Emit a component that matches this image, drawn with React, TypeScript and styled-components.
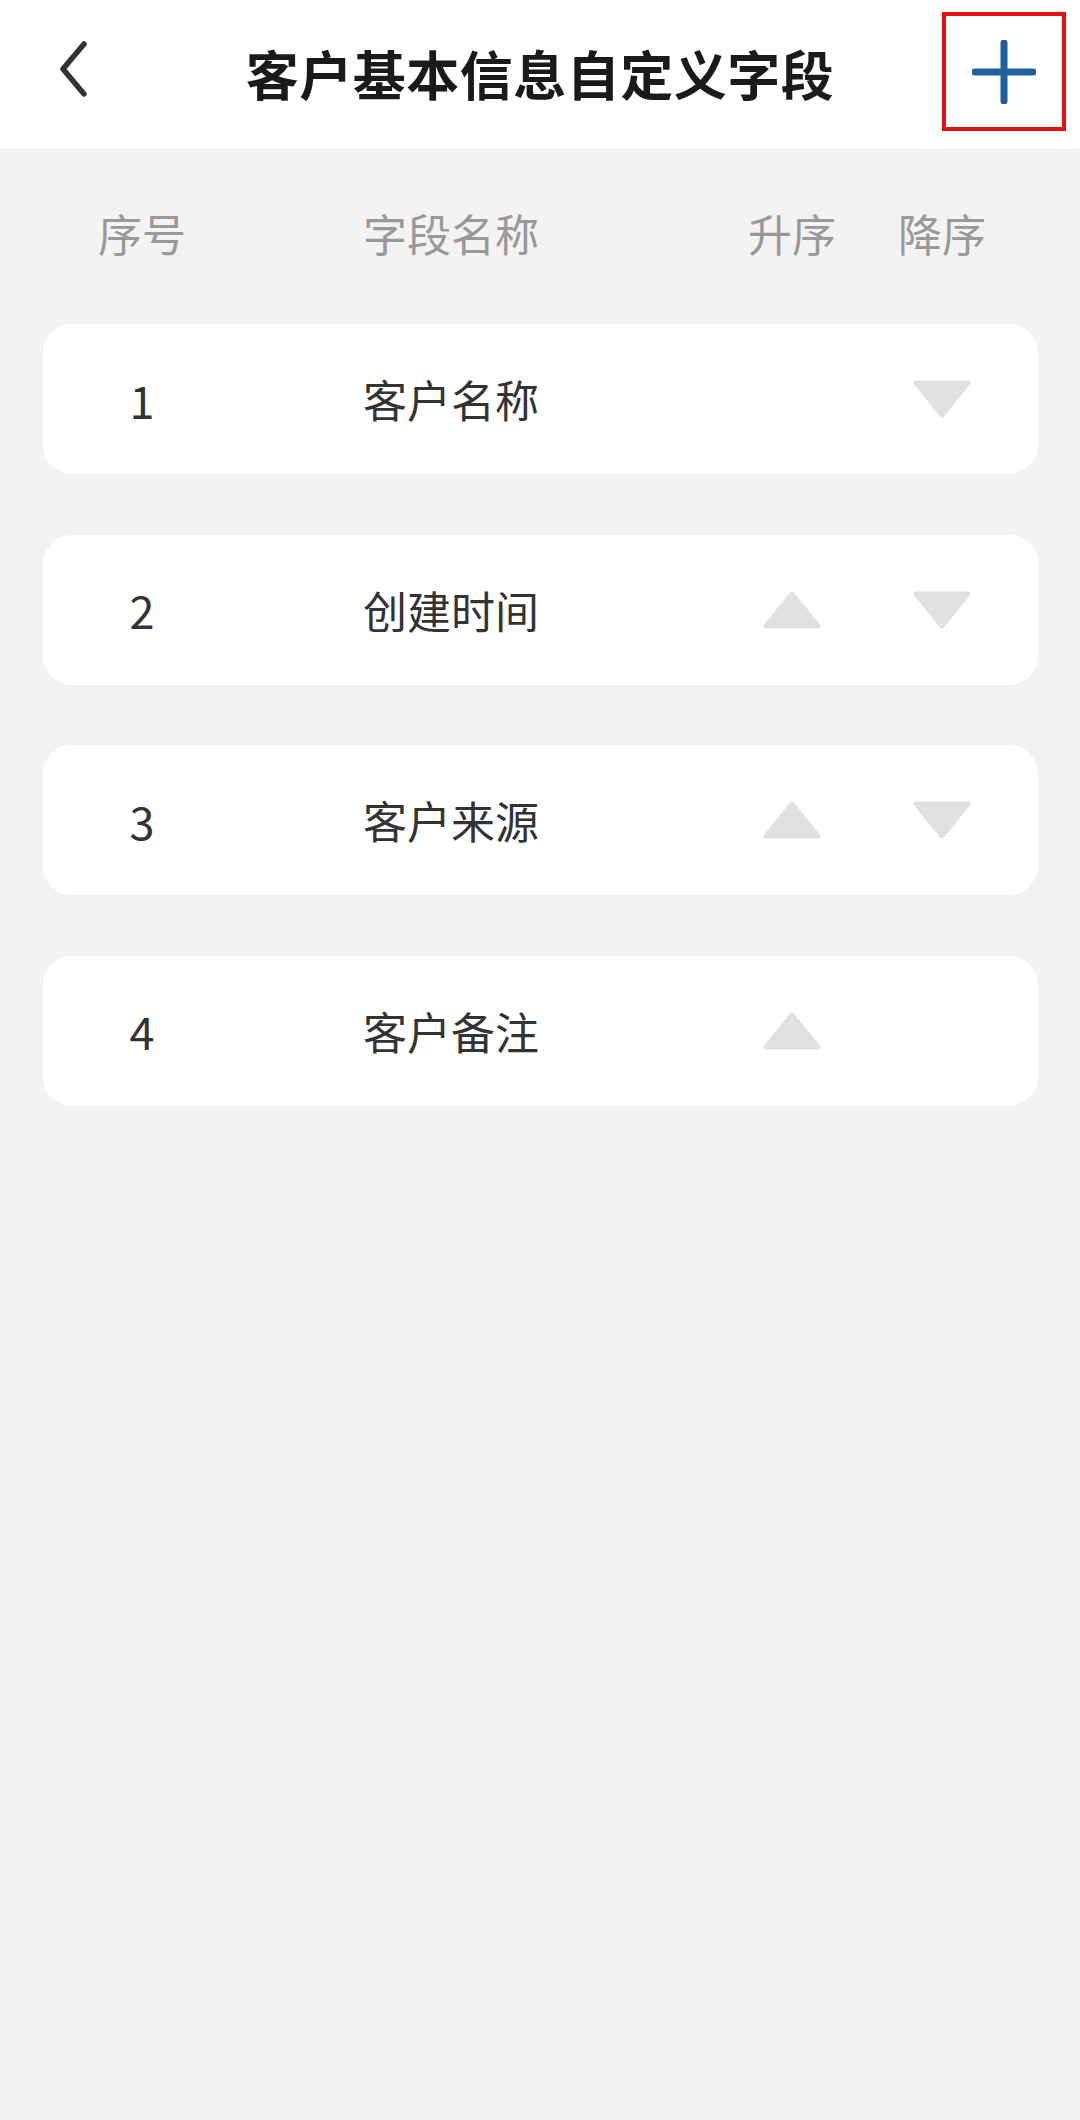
import styled, { createGlobalStyle } from "styled-components";

const GlobalStyle = createGlobalStyle`
  html, body {
    margin: 0;
    padding: 0;
    background: #f3f3f3;
  }
  body {
    font-family: "Noto Sans CJK SC", "Noto Sans", sans-serif;
    min-height: 2120px;
  }
`;

const Page = styled.div`
  min-height: 2120px;
  background: #f3f3f3;
`;

const Header = styled.header`
  display: grid;
  grid-template-columns: 1fr auto 1fr;
  align-items: center;
  height: 150px;
  background: #ffffff;
  border-bottom: 1px solid #ececec;
  box-sizing: border-box;
`;

const BackButton = styled.button`
  justify-self: start;
  display: flex;
  align-items: center;
  margin-left: 57px;
  margin-top: -12px;
  padding: 0;
  border: none;
  background: none;
  cursor: pointer;
`;

const Title = styled.h1`
  margin: 0;
  margin-top: -4px;
  font-size: 53px;
  font-weight: 700;
  color: #1a1a1a;
  letter-spacing: 0.5px;
`;

const AddButton = styled.button`
  justify-self: end;
  align-self: start;
  display: flex;
  align-items: center;
  justify-content: center;
  width: 124px;
  height: 119px;
  margin: 12px 14px 0 0;
  padding: 0;
  border: 4px solid #e41111;
  box-sizing: border-box;
  background: none;
  cursor: pointer;
`;

const Content = styled.main`
  padding: 0 42px 0 43px;
`;

const columns = "198px 1fr 150px 150px";

const ColumnRow = styled.div`
  display: grid;
  grid-template-columns: ${columns};
  padding: 61px 21px 69px 0;
  font-size: 44px;
  line-height: 44px;
  color: #999999;
`;

const Cell = styled.div<{ $align?: "center" | "left" }>`
  text-align: ${({ $align }) => $align ?? "center"};
  padding-left: ${({ $align }) => ($align === "left" ? "122px" : "0")};
  white-space: nowrap;
`;

const List = styled.div`
  display: flex;
  flex-direction: column;
  gap: 60.5px;
`;

const Card = styled.div`
  display: grid;
  grid-template-columns: ${columns};
  align-items: center;
  height: 150px;
  padding-right: 21px;
  background: #ffffff;
  border-radius: 29px;
  font-size: 44px;
  color: #333333;
`;

const Number = styled(Cell)`
  font-size: 45px;
`;

const ArrowSlot = styled.div`
  display: flex;
  justify-content: center;
  align-items: center;
  height: 40px;
`;

const Triangle = ({ up }: { up?: boolean }) => (
  <svg width="58" height="38" viewBox="0 0 58 38">
    <polygon
      points={up ? "3,35 29,3 55,35" : "3,3 55,3 29,35"}
      fill="#e1e1e1"
      stroke="#e1e1e1"
      strokeWidth="5"
      strokeLinejoin="round"
    />
  </svg>
);

const fields = [
  { id: 1, name: "客户名称" },
  { id: 2, name: "创建时间" },
  { id: 3, name: "客户来源" },
  { id: 4, name: "客户备注" },
];

const App = () => {
  return (
    <Page>
      <GlobalStyle />
      <Header>
        <BackButton>
          <svg width="32" height="56" viewBox="0 0 32 56">
            <polyline
              points="27,3 6,28 27,53"
              fill="none"
              stroke="#333333"
              strokeWidth="5.5"
              strokeLinecap="round"
              strokeLinejoin="round"
            />
          </svg>
        </BackButton>
        <Title>客户基本信息自定义字段</Title>
        <AddButton>
          <svg width="64" height="64" viewBox="0 0 64 64">
            <path
              d="M32 3 V61 M3 32 H61"
              stroke="#1f5f9f"
              strokeWidth="7"
              strokeLinecap="round"
            />
          </svg>
        </AddButton>
      </Header>
      <Content>
        <ColumnRow>
          <Cell>序号</Cell>
          <Cell $align="left">字段名称</Cell>
          <Cell>升序</Cell>
          <Cell>降序</Cell>
        </ColumnRow>
        <List>
          {fields.map((field, index) => (
            <Card key={field.id}>
              <Number>{field.id}</Number>
              <Cell $align="left">{field.name}</Cell>
              <ArrowSlot>{index > 0 && <Triangle up />}</ArrowSlot>
              <ArrowSlot>{index < fields.length - 1 && <Triangle />}</ArrowSlot>
            </Card>
          ))}
        </List>
      </Content>
    </Page>
  );
};

export default App;
